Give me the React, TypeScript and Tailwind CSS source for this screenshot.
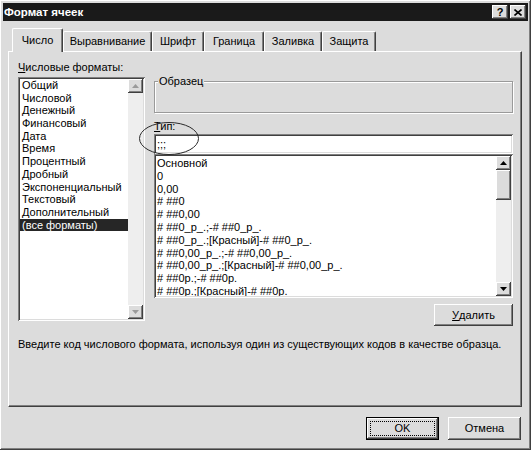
import React from "react";

const raised =
  "shadow-[inset_-1px_-1px_#404040,inset_1px_1px_#ffffff,inset_-2px_-2px_#808080,inset_2px_2px_#dcdcdc]";
const sunken =
  "shadow-[inset_1px_1px_#808080,inset_-1px_-1px_#ffffff,inset_2px_2px_#404040,inset_-2px_-2px_#dcdcdc]";

const TABS = [
  { label: "Число", w: "w-[51px]", active: true },
  { label: "Выравнивание", w: "w-[89px]" },
  { label: "Шрифт", w: "w-[52px]" },
  { label: "Граница", w: "w-[60px]" },
  { label: "Заливка", w: "w-[58px]" },
  { label: "Защита", w: "w-[54px]" },
];

const CATEGORIES = [
  "Общий",
  "Числовой",
  "Денежный",
  "Финансовый",
  "Дата",
  "Время",
  "Процентный",
  "Дробный",
  "Экспоненциальный",
  "Текстовый",
  "Дополнительный",
  "(все форматы)",
];

const CODES = [
  "Основной",
  "0",
  "0,00",
  "# ##0",
  "# ##0,00",
  "# ##0_р_.;-# ##0_р_.",
  "# ##0_р_.;[Красный]-# ##0_р_.",
  "# ##0,00_р_.;-# ##0,00_р_.",
  "# ##0,00_р_.;[Красный]-# ##0,00_р_.",
  "# ##0р.;-# ##0р.",
  "# ##0р.;[Красный]-# ##0р.",
];

const Arrow = ({ down, disabled }: { down?: boolean; disabled?: boolean }) => (
  <svg width="7" height="4" viewBox="0 0 7 4">
    <path
      d={down ? "M0 0H7L3.5 4Z" : "M3.5 0L7 4H0Z"}
      fill={disabled ? "#9a9a9a" : "#000000"}
    />
  </svg>
);

const ScrollBtn = ({ down, disabled }: { down?: boolean; disabled?: boolean }) => (
  <div
    className={`w-[15px] h-[14px] shrink-0 bg-[#dcdcdc] flex items-center justify-center ${raised}`}
  >
    <Arrow down={down} disabled={disabled} />
  </div>
);

const App = () => {
  return (
    <div
      className={`relative w-[531px] h-[450px] bg-[#dcdcdc] overflow-hidden font-['Liberation_Sans',Arial,sans-serif] text-[11px] text-black ${raised}`}
    >
      {/* title bar */}
      <div className="pt-[3px] px-[3px]">
        <div className="h-[18px] bg-[#1a1a1a] flex items-center justify-between pl-[1px] pr-[2px]">
          <span className="text-white font-bold text-[11.5px] leading-[18px]">Формат ячеек</span>
          <div className="flex gap-[2px]">
            <div
              className={`w-[16px] h-[14px] bg-[#dcdcdc] flex items-center justify-center font-bold leading-none ${raised}`}
            >
              ?
            </div>
            <div
              className={`w-[16px] h-[14px] bg-[#dcdcdc] flex items-center justify-center ${raised}`}
            >
              <svg width="8" height="7" viewBox="0 0 8 7">
                <path d="M0.5 0.5L7.5 6.5M7.5 0.5L0.5 6.5" stroke="#000" strokeWidth="1.6" />
              </svg>
            </div>
          </div>
        </div>
      </div>

      {/* tabs */}
      <div className="mt-[7px] ml-[12px] h-[23px] flex items-end">
        {TABS.map((t) => (
          <div
            key={t.label}
            className={`${t.w} ${
              t.active ? "h-[24px] -mb-[1px] relative z-10" : "h-[20px]"
            } bg-[#dcdcdc] border-l border-t border-r border-white border-r-[#404040] rounded-t-[2px] shadow-[inset_-1px_0_#808080] flex items-center justify-center leading-[13px]`}
          >
            {t.label}
          </div>
        ))}
      </div>

      {/* panel */}
      <div className="ml-[8px] w-[514px] h-[356px] border border-white border-r-[#404040] border-b-[#404040] shadow-[inset_-1px_-1px_#808080] pt-[9px] pl-[9px] pr-[8px]">
        <div className="flex gap-[9px]">
          {/* left column */}
          <div className="w-[127px] flex flex-col">
            <div className="leading-[13px] h-[13px]">
              <span className="underline underline-offset-[1px]">Ч</span>исловые форматы:
            </div>
            <div className={`mt-[3px] h-[244px] bg-white p-[2px] flex ${sunken}`}>
              <div className="flex-1 flex flex-col overflow-hidden">
                {CATEGORIES.map((c, i) => (
                  <div
                    key={c}
                    className={`h-[12.7px] leading-[12.7px] pl-[2px] whitespace-nowrap ${
                      i === CATEGORIES.length - 1 ? "bg-[#262626] text-white" : ""
                    }`}
                  >
                    {c}
                  </div>
                ))}
              </div>
              <div className="w-[15px] flex flex-col bg-[#eeeeee]">
                <ScrollBtn disabled />
                <div className="flex-1" />
                <ScrollBtn down disabled />
              </div>
            </div>
          </div>

          {/* right column */}
          <div className="relative w-[359px] flex flex-col">
            <div className="mt-[20px] h-[32px] border border-[#9a9a9a] shadow-[1px_1px_#ffffff,inset_1px_1px_#ffffff]">
              <span className="block w-fit -mt-[7px] ml-[3px] px-[1px] bg-[#dcdcdc] leading-[13px]">
                Образец
              </span>
            </div>
            <div className="mt-[7px] leading-[13px] h-[13px]">
              <span className="underline underline-offset-[1px]">Т</span>ип:
            </div>
            <div className={`mt-[1px] h-[20px] bg-white px-[3px] flex items-center ${sunken}`}>
              ;;;
            </div>
            <div className={`h-[144px] bg-white p-[2px] flex ${sunken}`}>
              <div className="flex-1 flex flex-col overflow-hidden pt-[1px]">
                {CODES.map((c) => (
                  <div key={c} className="h-[12.8px] leading-[12.8px] pl-[1px] whitespace-nowrap">
                    {c}
                  </div>
                ))}
              </div>
              <div className="w-[15px] flex flex-col bg-[#eeeeee]">
                <ScrollBtn />
                <div className={`h-[30px] bg-[#dcdcdc] ${raised}`} />
                <div className="flex-1" />
                <ScrollBtn down />
              </div>
            </div>
            <div
              className={`mt-[6px] self-end w-[79px] h-[22px] bg-[#dcdcdc] flex items-center justify-center ${raised}`}
            >
              <span className="underline underline-offset-[1px]">У</span>далить
            </div>

            {/* annotation ring */}
            <svg
              className="absolute left-[-16px] top-[60px] pointer-events-none"
              width="64"
              height="36"
              viewBox="0 0 64 36"
            >
              <ellipse cx="31" cy="17.5" rx="29.5" ry="16" fill="none" stroke="#2a2a2a" strokeWidth="1" />
            </svg>
          </div>
        </div>

        <div className="mt-[12px] leading-[13px] whitespace-nowrap">
          Введите код числового формата, используя один из существующих кодов в качестве образца.
        </div>
      </div>

      {/* dialog buttons */}
      <div className="mt-[10px] pr-[10px] flex justify-end gap-[9px]">
        <div className="w-[73px] h-[23px] border border-black">
          <div className={`w-full h-full bg-[#dcdcdc] p-[3px] flex ${raised}`}>
            <div className="flex-1 border border-dotted border-black flex items-center justify-center leading-none">
              OK
            </div>
          </div>
        </div>
        <div
          className={`w-[73px] h-[23px] bg-[#dcdcdc] flex items-center justify-center ${raised}`}
        >
          Отмена
        </div>
      </div>
    </div>
  );
};

export default App;
